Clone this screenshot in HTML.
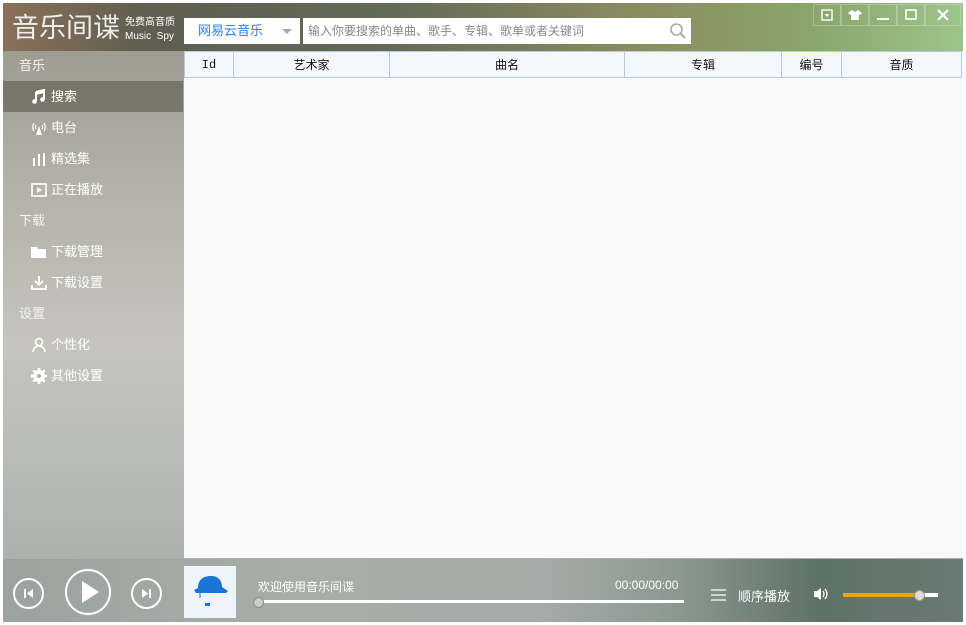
<!DOCTYPE html>
<html><head><meta charset="utf-8"><style>
body{margin:0;width:966px;height:625px;background:#fff;position:relative;overflow:hidden;font-family:"Liberation Sans","Noto Sans CJK SC",sans-serif;}
.win{position:absolute;left:3px;top:3px;width:960px;height:619px;overflow:hidden;
background:linear-gradient(180deg,#96958a 0%,#b3b2a8 30%,#c5c4bd 55%,#b4b8b4 80%,#a3aaa6 100%);}
.top{position:absolute;left:0;top:0;width:960px;height:48px;background:linear-gradient(90deg,#8a7058 0%,#5f5e50 15%,#626a58 40%,#8b8a60 65%,#8aa66c 85%,#9ec48c 100%);}
.bot{position:absolute;left:0;top:556px;width:960px;height:63px;background:linear-gradient(90deg,#9ca39f 0%,#a8ada7 30%,#a7aca9 55%,#8c9992 70%,#5e7268 85%,#6a7a74 100%);}
.logo{position:absolute;left:9px;top:8px;color:#eee;font-size:27px;line-height:34px;white-space:nowrap;}
.logo2{position:absolute;left:122px;top:13px;color:#fff;font-size:10px;line-height:14px;white-space:nowrap;}
.sel{position:absolute;left:181px;top:15px;width:116px;height:26px;background:#fff;color:#2f7ee0;font-size:13px;line-height:26px;text-indent:14px;}
.sel:after{content:"";position:absolute;right:8px;top:11px;border:5px solid transparent;border-top-color:#aaa;}
.srch{position:absolute;left:300px;top:15px;width:388px;height:26px;background:#fff;color:#888;font-size:12px;line-height:26px;text-indent:5px;}
.wb{position:absolute;top:1px;height:20px;width:26px;border:1px solid rgba(255,255,255,.25);color:#fff;font-size:12px;text-align:center;line-height:20px;}
.side{position:absolute;left:0;top:47px;width:180px;color:#fff;font-size:13px;}
.grp{height:31px;line-height:31px;padding-left:16px;color:#f4f4f0;}
.it{height:31px;line-height:31px;padding-left:48px;position:relative;}
.it svg{position:absolute;left:28px;top:8px;}
.act{background:rgba(100,100,85,.7);}
.tbl{position:absolute;left:181px;top:48px;width:779px;height:507px;background:#f9f9fa;}
.th{position:absolute;top:0;height:27px;border:1px solid #b3cde8;border-left:none;background:#f6f7fc;font-size:12px;line-height:27px;text-align:center;color:#111;box-sizing:border-box}
.circ{position:absolute;border:2px solid #fff;border-radius:50%;box-sizing:border-box;}
</style></head><body><div class="win">
<div class="top"></div>
<div class="bot"></div>
<div class="logo">音乐间谍</div>
<div class="logo2">免费高音质<br>Music&nbsp; Spy</div>
<div class="sel">网易云音乐</div>
<div class="srch">输入你要搜索的单曲、歌手、专辑、歌单或者关键词
<svg style="position:absolute;right:4px;top:4px" width="18" height="18"><circle cx="7.5" cy="7.5" r="5.5" fill="none" stroke="#aaa" stroke-width="1.6"/><path d="M11.5 11.5L16 16" stroke="#aaa" stroke-width="2"/></svg></div>
<div class="wb" style="left:810px"><svg width="12" height="12" style="margin-top:4px"><rect x="1" y="1" width="10" height="10" fill="none" stroke="#fff" stroke-width="1.4"/><path d="M3.5 5h5l-2.5 3z" fill="#fff"/></svg></div>
<div class="wb" style="left:838px"><svg width="14" height="12" style="margin-top:4px"><path d="M4 1l3 2 3-2 4 3-2 2-1-1v6H3V5L2 6 0 4z" fill="#fff"/></svg></div>
<div class="wb" style="left:866px"><svg width="12" height="12" style="margin-top:4px"><rect x="0" y="9" width="12" height="2" fill="#fff"/></svg></div>
<div class="wb" style="left:894px"><svg width="12" height="12" style="margin-top:4px"><rect x="1" y="1" width="10" height="9" fill="none" stroke="#fff" stroke-width="1.6"/></svg></div>
<div class="wb" style="left:922px;width:34px"><svg width="12" height="12" style="margin-top:4px"><path d="M1 1l10 10M11 1L1 11" stroke="#fff" stroke-width="2.2"/></svg></div>

<div class="side">
<div class="grp">音乐</div>
<div class="it act"><svg width="16" height="16"><path d="M5 3v9M13 1v9M5 3l8-2v2L5 5" stroke="#fff" stroke-width="2" fill="none"/><circle cx="3.5" cy="12.5" r="2.3" fill="#fff"/><circle cx="11.5" cy="10.5" r="2.3" fill="#fff"/></svg>搜索</div>
<div class="it"><svg width="16" height="16"><path d="M3 3a7 7 0 0 0 0 8M13 3a7 7 0 0 1 0 8M5 5a4 4 0 0 0 0 4M11 5a4 4 0 0 1 0 4" stroke="#fff" fill="none" stroke-width="1.2"/><path d="M8 6l-3 9h6z" fill="#fff"/></svg>电台</div>
<div class="it"><svg width="16" height="16"><rect x="2" y="7" width="2" height="8" fill="#fff"/><rect x="7" y="3" width="2" height="12" fill="#fff"/><rect x="12" y="2" width="2" height="13" fill="#fff"/></svg>精选集</div>
<div class="it"><svg width="16" height="16"><rect x="1" y="2" width="14" height="12" fill="none" stroke="#fff" stroke-width="1.6"/><path d="M6 5v6l5-3z" fill="#fff"/></svg>正在播放</div>
<div class="grp">下载</div>
<div class="it"><svg width="16" height="16"><path d="M0 3h6l1 2h8v9H0z" fill="#fff"/></svg>下载管理</div>
<div class="it"><svg width="16" height="16"><path d="M8 1v9M4 6l4 4 4-4M1 10v4h14v-4" stroke="#fff" stroke-width="1.8" fill="none"/></svg>下载设置</div>
<div class="grp">设置</div>
<div class="it"><svg width="16" height="16"><circle cx="8" cy="5" r="3.5" fill="none" stroke="#fff" stroke-width="1.6"/><path d="M2 15a6 6 0 0 1 12 0" fill="none" stroke="#fff" stroke-width="1.6"/></svg>个性化</div>
<div class="it"><svg width="16" height="16"><circle cx="8" cy="8" r="4.5" fill="none" stroke="#fff" stroke-width="3"/><path d="M8 0v16M0 8h16M2.3 2.3l11.4 11.4M13.7 2.3L2.3 13.7" stroke="#fff" stroke-width="2.5"/><circle cx="8" cy="8" r="2" fill="#b0afa5"/></svg>其他设置</div>
</div>

<div class="tbl">
<div class="th" style="left:0;width:50px;border-left:1px solid #b3cde8;font-family:'Liberation Mono',monospace">Id</div>
<div class="th" style="left:50px;width:156px">艺术家</div>
<div class="th" style="left:206px;width:235px">曲名</div>
<div class="th" style="left:441px;width:157px">专辑</div>
<div class="th" style="left:598px;width:60px">编号</div>
<div class="th" style="left:658px;width:120px">音质</div>
</div>

<div class="circ" style="left:10px;top:575px;width:31px;height:31px"><svg width="27" height="27"><rect x="9" y="9" width="2" height="9" fill="#fff"/><path d="M18 9v9l-6-4.5z" fill="#fff"/></svg></div>
<div class="circ" style="left:62px;top:566px;width:46px;height:46px"><svg width="42" height="42"><path d="M15 10v22l17-11z" fill="#fff"/></svg></div>
<div class="circ" style="left:128px;top:575px;width:31px;height:31px"><svg width="27" height="27"><path d="M9 9v9l6-4.5z" fill="#fff"/><rect x="16" y="9" width="2" height="9" fill="#fff"/></svg></div>
<div style="position:absolute;left:181px;top:563px;width:52px;height:52px;background:#eef6fb"><svg width="52" height="52"><path d="M14 22c0-9 6-12 13-12s11 4 11 11l6 4-2 2H12l-2-3z" fill="#1b74d8"/><path d="M16 27v5" stroke="#1b74d8"/><rect x="21" y="37" width="5" height="3" fill="#1b74d8"/></svg></div>
<div style="position:absolute;left:255px;top:575px;color:#fff;font-size:12px">欢迎使用音乐间谍</div>
<div style="position:absolute;left:612px;top:575px;color:#fff;font-size:12px">00:00/00:00</div>
<div style="position:absolute;left:255px;top:597px;width:426px;height:3px;background:#fff"></div>
<div style="position:absolute;left:250px;top:594px;width:9px;height:9px;border-radius:50%;background:#ccc;border:1px solid #888"></div>
<svg style="position:absolute;left:708px;top:585px" width="16" height="14"><path d="M0 2h15M0 7h15M0 12h15" stroke="#fff" stroke-width="1.2"/></svg>
<div style="position:absolute;left:735px;top:583px;color:#fff;font-size:13px">顺序播放</div>
<svg style="position:absolute;left:810px;top:584px" width="16" height="14"><path d="M1 4h3l4-3v12l-4-3H1z" fill="#fff"/><path d="M10 4q2 3 0 6M12 2q4 5 0 10" stroke="#fff" fill="none" stroke-width="1.3"/></svg>
<div style="position:absolute;left:840px;top:590px;width:95px;height:4px;background:#fff"></div>
<div style="position:absolute;left:840px;top:590px;width:76px;height:4px;background:#f5a300"></div>
<div style="position:absolute;left:911px;top:587px;width:9px;height:9px;border-radius:50%;background:#ddd;border:1px solid #999"></div>
</div></body></html>
